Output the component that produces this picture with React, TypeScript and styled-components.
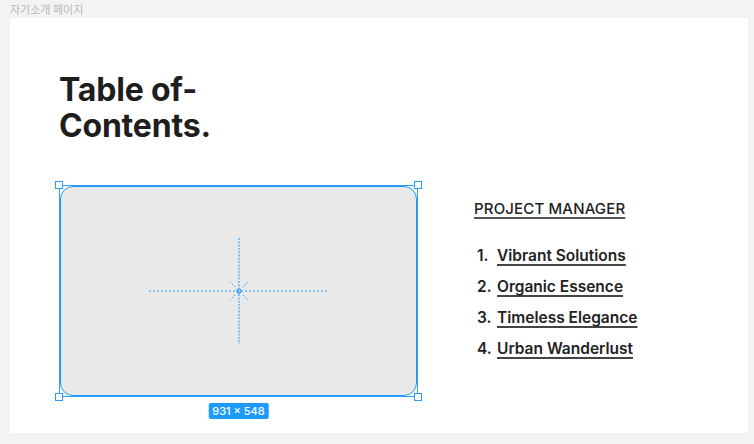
import React from "react";
import styled, { createGlobalStyle } from "styled-components";

const Global = createGlobalStyle`
  html, body { margin: 0; padding: 0; background: #f3f3f3; }
  * { box-sizing: border-box; }
`;

const Page = styled.div`
  width: 754px;
  height: 444px;
  display: flex;
  flex-direction: column;
  font-family: Inter, "Noto Sans", sans-serif;
`;

const PageLabel = styled.div`
  height: 18px;
  padding: 3px 0 0 10px;
  font-family: "Noto Sans CJK KR", "Noto Sans", sans-serif;
  font-size: 11px;
  line-height: 13px;
  color: #b8b8b8;
`;

const Card = styled.div`
  margin-left: 10px;
  width: 738px;
  height: 415px;
  background: #ffffff;
  padding: 54px 0 0 49px;
  display: flex;
  flex-direction: column;
`;

const Heading = styled.h1`
  margin: 0;
  font-size: 32px;
  line-height: 36px;
  font-weight: 700;
  color: #1e1e1e;
  letter-spacing: -0.2px;
`;

const Row = styled.div`
  display: flex;
  align-items: flex-start;
  margin-top: 41px;
`;

const Selection = styled.div`
  position: relative;
  width: 359px;
  height: 212px;
  border: 1px solid #2f9ff9;
`;

const Frame = styled.div`
  width: 100%;
  height: 100%;
  border: 1px solid #1f98fb;
  border-radius: 13px;
  background: #e9e9e9;
  display: flex;
  align-items: center;
  justify-content: center;
`;

const Handle = styled.span<{ $top: boolean; $left: boolean }>`
  position: absolute;
  width: 8px;
  height: 8px;
  background: #ffffff;
  border: 1px solid #2a9cfb;
  ${(p) => (p.$top ? "top: -5px;" : "bottom: -5px;")}
  ${(p) => (p.$left ? "left: -5px;" : "right: -5px;")}
`;

const SizeBadge = styled.div`
  position: absolute;
  top: calc(100% + 7px);
  left: 50%;
  transform: translateX(-50%);
  height: 16px;
  padding: 0 4px;
  border-radius: 2px;
  background: #1c9bfd;
  color: #ffffff;
  font-size: 11px;
  font-weight: 500;
  line-height: 16px;
  white-space: nowrap;
`;

const Side = styled.div`
  margin-left: 56px;
  padding-top: 14px;
  display: flex;
  flex-direction: column;
`;

const SideTitle = styled.div`
  font-size: 15px;
  line-height: 20px;
  font-weight: 500;
  letter-spacing: 0.15px;
  color: #222222;
  text-decoration: underline;
  text-decoration-thickness: 1.5px;
  text-underline-offset: 3px;
  text-decoration-color: #555555;
`;

const List = styled.ol`
  list-style: none;
  margin: 21px 0 0 0;
  padding: 0;
  display: flex;
  flex-direction: column;
`;

const Item = styled.li`
  display: flex;
  font-size: 15.5px;
  line-height: 31px;
  font-weight: 600;
  color: #222222;
`;

const Num = styled.span`
  width: 23px;
  padding-left: 3px;
`;

const ItemText = styled.span`
  text-decoration: underline;
  text-decoration-thickness: 1.5px;
  text-underline-offset: 3px;
  text-decoration-color: #444444;
`;

const Crosshair = () => (
  <svg width="180" height="106" viewBox="0 0 180 106">
    <line x1="0" y1="53" x2="180" y2="53" stroke="#2a9dff" strokeWidth="1" strokeDasharray="2 2" />
    <line x1="90" y1="0" x2="90" y2="106" stroke="#5ab2fb" strokeWidth="1.5" strokeDasharray="2 1.3" />
    <g stroke="#3aa5ff" strokeWidth="1" strokeDasharray="1.5 1.2">
      <line x1="86" y1="49" x2="80" y2="43" />
      <line x1="94" y1="49" x2="100" y2="43" />
      <line x1="86" y1="57" x2="80" y2="63" />
      <line x1="94" y1="57" x2="100" y2="63" />
    </g>
    <circle cx="90" cy="53" r="2" fill="none" stroke="#2a9dff" strokeWidth="1.2" />
  </svg>
);

const items = ["Vibrant Solutions", "Organic Essence", "Timeless Elegance", "Urban Wanderlust"];

export default function App() {
  return (
    <>
      <Global />
      <Page>
        <PageLabel>자기소개 페이지</PageLabel>
        <Card>
          <Heading>
            Table of-
            <br />
            Contents.
          </Heading>
          <Row>
            <Selection>
              <Frame>
                <Crosshair />
              </Frame>
              <Handle $top $left />
              <Handle $top $left={false} />
              <Handle $top={false} $left />
              <Handle $top={false} $left={false} />
              <SizeBadge>931 × 548</SizeBadge>
            </Selection>
            <Side>
              <SideTitle>PROJECT MANAGER</SideTitle>
              <List>
                {items.map((t, i) => (
                  <Item key={t}>
                    <Num>{i + 1}.</Num>
                    <ItemText>{t}</ItemText>
                  </Item>
                ))}
              </List>
            </Side>
          </Row>
        </Card>
      </Page>
    </>
  );
}
